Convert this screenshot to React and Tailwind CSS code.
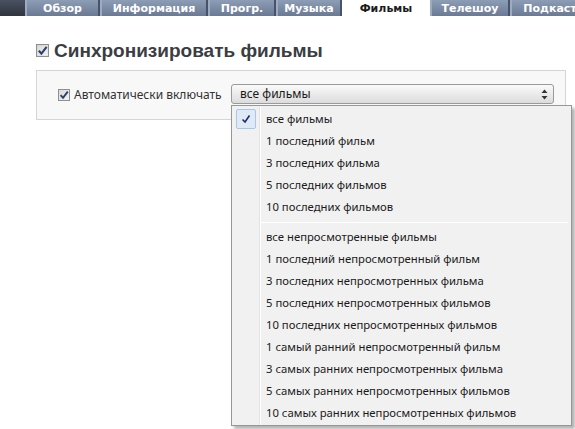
import React from 'react';

const tabs = [
  { label: 'Обзор', w: 'w-[75px]' },
  { label: 'Информация', w: 'w-[108px]' },
  { label: 'Прогр.', w: 'w-[68px]' },
  { label: 'Музыка', w: 'w-[66px]' },
  { label: 'Фильмы', w: 'w-[88px]', active: true },
  { label: 'Телешоу', w: 'w-[80px]' },
  { label: 'Подкаст', w: 'w-[80px]' },
];

const recent = [
  'все фильмы',
  '1 последний фильм',
  '3 последних фильма',
  '5 последних фильмов',
  '10 последних фильмов',
];

const unwatched = [
  'все непросмотренные фильмы',
  '1 последний непросмотренный фильм',
  '3 последних непросмотренных фильма',
  '5 последних непросмотренных фильмов',
  '10 последних непросмотренных фильмов',
  '1 самый ранний непросмотренный фильм',
  '3 самых ранних непросмотренных фильма',
  '5 самых ранних непросмотренных фильмов',
  '10 самых ранних непросмотренных фильмов',
];

// small grey checkbox with a dark blue tick
const CheckBox = ({ size = 12 }) => (
  <svg width={size} height={size} viewBox="0 0 12 12" className="shrink-0">
    <defs>
      <linearGradient id="cbg" x1="0" y1="0" x2="1" y2="1">
        <stop offset="0" stopColor="#d8d8d8" />
        <stop offset="1" stopColor="#f4f4f4" />
      </linearGradient>
    </defs>
    <rect x="0.5" y="0.5" width="11" height="11" fill="url(#cbg)" stroke="#8e8f8f" />
    <path d="M2.6 6.2 L5 8.8 L9.8 2.6" fill="none" stroke="#2b3f6e" strokeWidth="1.9" />
  </svg>
);

const MenuItem = ({ text, checked }) => (
  <div className="h-[22px] flex items-center relative">
    {checked && (
      <div className="absolute left-[4px] top-[1px] w-[20px] h-[20px] rounded-[2px] border border-[#a9c6e6] bg-[#dfeaf6] flex items-center justify-center">
        <svg width="10" height="10" viewBox="0 0 10 10">
          <path d="M1.5 5.5 L4 8 L8.5 1.5" fill="none" stroke="#1e2f66" strokeWidth="1.6" />
        </svg>
      </div>
    )}
    <span className="pl-[34px] text-[11.3px] text-[#1a1a1a] whitespace-nowrap">{text}</span>
  </div>
);

export default function App() {
  return (
    <div
      className="w-[575px] h-[429px] bg-white overflow-hidden relative"
      style={{ fontFamily: '"Noto Sans", "DejaVu Sans", sans-serif' }}
    >
      {/* tab bar */}
      <div className="flex h-[16px]" style={{ fontFamily: '"DejaVu Sans", Verdana, sans-serif' }}>
        <div className="w-[25px] shrink-0 bg-gradient-to-b from-[#4a5262] to-[#2f343e]" />
        {tabs.map((t) => (
          <div
            key={t.label}
            className={
              t.active
                ? `${t.w} shrink-0 bg-white text-[#1c1c1c] text-[11px] font-bold flex items-center justify-center leading-none`
                : `${t.w} shrink-0 bg-gradient-to-b from-[#8e9db6] to-[#6a7a94] text-white text-[11px] font-bold flex items-center justify-center leading-none border-l-2 border-r-2 border-l-[#9dabc1] border-r-[#48526a]`
            }
          >
            {t.label}
          </div>
        ))}
      </div>

      {/* heading */}
      <div className="flex items-center gap-[5px] ml-[36px] mt-[25px]">
        <CheckBox size={13} />
        <span
          className="text-[19px] font-bold text-[#3a3d42] leading-none"
          style={{ fontFamily: '"Liberation Sans", Arial, sans-serif' }}
        >
          Синхронизировать фильмы
        </span>
      </div>

      {/* options panel */}
      <div className="ml-[36px] mt-[10px] w-[530px] h-[50px] border border-[#d5d5d5] bg-[#f8f8f8] flex items-center pl-[21px]">
        <div className="flex items-center gap-[4px] w-[173px]">
          <CheckBox />
          <span className="text-[12px] text-[#333]">Автоматически включать</span>
        </div>
        <div className="w-[323px] h-[20px] rounded-[3px] border border-[#9a9a9a] bg-gradient-to-b from-[#fafafa] to-[#dcdcdc] flex items-center justify-between pl-[8px] pr-[5px] mt-[-2px]">
          <span className="text-[12px] text-[#1a1a1a]">все фильмы</span>
          <svg width="7" height="11" viewBox="0 0 7 11">
            <path d="M3.5 0.5 L6.5 4 L0.5 4 Z" fill="#333" />
            <path d="M3.5 10.5 L6.5 7 L0.5 7 Z" fill="#333" />
          </svg>
        </div>
      </div>

      {/* open dropdown menu */}
      <div className="absolute left-[231px] top-[105px] w-[341px] h-[321px] bg-[#f1f1f1] border border-[#979797] shadow-[3px_3px_3px_rgba(0,0,0,0.3)] py-[2px]">
        <div className="absolute left-[27px] top-0 bottom-0 w-px bg-[#e2e3e3]" />
        <div className="absolute left-[28px] top-0 bottom-0 w-px bg-white" />
        {recent.map((t, i) => (
          <MenuItem key={t} text={t} checked={i === 0} />
        ))}
        <div className="h-[8px] flex items-center pl-[29px] pr-[3px]">
          <div className="w-full h-px bg-[#d8d8d8] border-b border-white" />
        </div>
        {unwatched.map((t) => (
          <MenuItem key={t} text={t} />
        ))}
      </div>
    </div>
  );
}
